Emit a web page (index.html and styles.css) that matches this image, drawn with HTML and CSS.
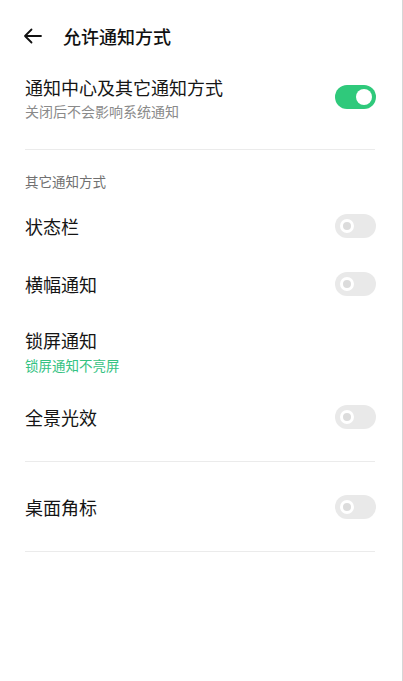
FILE: index.html
```html
<!DOCTYPE html>
<html lang="zh-CN">
<head>
    <meta charset="UTF-8">
    <meta name="viewport" content="width=device-width, initial-scale=1.0">
    <title>允许通知方式</title>
    <link rel="stylesheet" href="styles.css">
</head>
<body>
    <div class="screen">
        <!-- Barra de título -->
        <div class="header">
            <svg class="back" width="19" height="16" viewBox="0 0 19 16">
                <path d="M18 8H2M8.5 1.5L2 8l6.5 6.5" fill="none" stroke="#111" stroke-width="1.8" stroke-linecap="round" stroke-linejoin="round"/>
            </svg>
            <span class="header-title">允许通知方式</span>
        </div>

        <div class="item item-main">
            <div class="item-text">
                <div class="item-title">通知中心及其它通知方式</div>
                <div class="item-sub">关闭后不会影响系统通知</div>
            </div>
            <span class="switch on"></span>
        </div>

        <div class="divider"></div>

        <div class="section-label">其它通知方式</div>

        <div class="item">
            <div class="item-title">状态栏</div>
            <span class="switch"></span>
        </div>
        <div class="item">
            <div class="item-title">横幅通知</div>
            <span class="switch"></span>
        </div>
        <div class="item item-double">
            <div class="item-text">
                <div class="item-title">锁屏通知</div>
                <div class="item-sub green">锁屏通知不亮屏</div>
            </div>
        </div>
        <div class="item">
            <div class="item-title">全景光效</div>
            <span class="switch"></span>
        </div>

        <div class="divider gap-top"></div>

        <div class="item gap-top">
            <div class="item-title">桌面角标</div>
            <span class="switch"></span>
        </div>

        <div class="divider gap-top"></div>
    </div>
</body>
</html>
```

FILE: styles.css
```css
body {
    margin: 0;
    background-color: #fff;
    font-family: "Noto Sans CJK SC", "Noto Sans", sans-serif;
    color: #111;
}

.screen {
    width: 403px;
    min-height: 100vh;
    box-sizing: border-box;
    border-right: 1px solid #d6d6d6; /* linha fina na borda direita */
}

.header {
    height: 72px;
    display: flex;
    align-items: center;
    padding-left: 23px;
}

.back {
    display: block;
}

.header-title {
    margin-left: 21px;
    font-size: 18px;
    font-weight: 500;
    line-height: 24px;
}

/* Linhas da lista */
.item {
    height: 58px;
    display: flex;
    align-items: center;
    justify-content: space-between;
    padding: 0 26px 0 25px;
}

.item-main {
    height: auto;
    align-items: center;
    padding-top: 3px;
    padding-bottom: 28px;
}

.item-double {
    height: auto;
    padding-top: 15px;
    padding-bottom: 13px;
}

.item-title {
    font-size: 18px;
    line-height: 24px;
    color: #151515;
}

.item-sub {
    font-size: 14px;
    line-height: 20px;
    margin-top: 2px;
    color: #8a8a8a;
}

.item-sub.green {
    font-size: 13.5px;
    margin-top: 3px;
    color: #34c282;
}

.section-label {
    font-size: 13.5px;
    line-height: 18px;
    color: #707070;
    padding: 22px 25px 7px;
}

.divider {
    height: 1px;
    margin: 0 27px 0 25px;
    background-color: #ebebeb;
}

.gap-top {
    margin-top: 15px;
}

.item.gap-top {
    margin-top: 16px;
}

/* Interruptor */
.switch {
    position: relative;
    flex: none;
    width: 41px;
    height: 24px;
    border-radius: 12px;
    background-color: #e9e9e9;
}

.switch::after {
    content: "";
    position: absolute;
    top: 5px;
    left: 5px;
    width: 8px;
    height: 8px;
    border-radius: 50%;
    background-color: #dcdcdc;
    border: 3px solid #fff;
}

.switch.on {
    background-color: #2fc97b;
    margin-top: -2px;
}

.switch.on::after {
    left: 21px;
    top: 4px;
    width: 16px;
    height: 16px;
    border: none;
    background-color: #fff;
}
```
